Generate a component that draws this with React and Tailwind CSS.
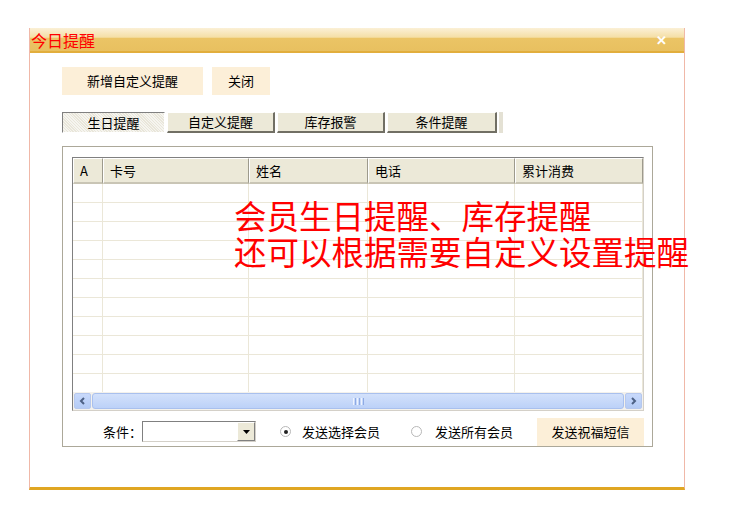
import React from 'react';

const COLS = [
  { label: 'A', w: 'w-[30px]' },
  { label: '卡号', w: 'w-[146px]' },
  { label: '姓名', w: 'w-[119px]' },
  { label: '电话', w: 'w-[147px]' },
  { label: '累计消费', w: 'flex-1' },
];

const TABS = [
  { label: '生日提醒', w: 'w-[103px]', active: true },
  { label: '自定义提醒', w: 'w-[108px]' },
  { label: '库存报警', w: 'w-[108px]' },
  { label: '条件提醒', w: 'w-[110px]' },
];

function Tab({ label, w, active }) {
  if (active) {
    return (
      <div
        className={`${w} h-[21px] flex items-center justify-center border border-t-[#808080] border-l-[#808080] border-b-white border-r-white bg-[repeating-linear-gradient(45deg,#f6f5f0_0px,#f6f5f0_1px,#e9e6da_1px,#e9e6da_2px)]`}
      >
        {label}
      </div>
    );
  }
  return (
    <div
      className={`${w} h-[21px] flex items-center justify-center bg-[#ece9d8] border-t border-l border-white border-r-2 border-b-2 border-r-[#716f64] border-b-[#716f64]`}
    >
      {label}
    </div>
  );
}

function Row() {
  return (
    <div className="flex h-[19px] border-b border-[#ebe7d8] shrink-0">
      {COLS.map((c, i) => (
        <div key={i} className={`${c.w} border-r border-[#ebe7d8] shrink-0`} />
      ))}
    </div>
  );
}

function Radio({ checked }) {
  return (
    <span className="w-[11px] h-[11px] rounded-full border border-[#b8b8b8] bg-white flex items-center justify-center">
      {checked && <span className="w-[4px] h-[4px] rounded-full bg-[#222]" />}
    </span>
  );
}

export default function App() {
  return (
    <div
      className="relative w-[740px] h-[514px] bg-white pt-[28px] pl-[29px] text-[13px] text-black"
      style={{ fontFamily: '"Noto Sans CJK SC", "Liberation Sans", sans-serif' }}
    >
      <div className="w-[656px] h-[462px] flex flex-col border-l border-r border-[#f0b8a8] border-b-[3px] border-b-[#e0a622]">
        {/* title bar */}
        <div className="h-[25px] flex items-center justify-between bg-[linear-gradient(#fbf0d6_0%,#f5dfa6_40%,#ebc465_45%,#e8c060_100%)] border-b-2 border-[#e2ae3c]">
          <span className="text-[16px] text-[#ff0000] leading-none pl-[1px]">今日提醒</span>
          <span className="text-white font-bold text-[13px] leading-none pr-[17px]">✕</span>
        </div>

        <div className="pl-[32px] pt-[14px] flex flex-col">
          {/* buttons */}
          <div className="flex gap-[9px]">
            <div className="w-[141px] h-[28px] bg-[#fcefd8] flex items-center justify-center">新增自定义提醒</div>
            <div className="w-[58px] h-[28px] bg-[#fcefd8] flex items-center justify-center">关闭</div>
          </div>

          {/* tabs */}
          <div className="flex gap-[2px] mt-[17px]">
            {TABS.map((t) => (
              <Tab key={t.label} {...t} />
            ))}
            <div className="w-[4px] h-[21px] bg-[#e4e1d4]" />
          </div>

          {/* group box */}
          <div className="mt-[13px] w-[591px] h-[301px] border border-[#aca899] pl-[9px] pt-[10px] flex flex-col">
            {/* grid */}
            <div className="w-[572px] h-[254px] border border-t-[#808080] border-l-[#808080] border-r-[#d4d0c8] border-b-[#d4d0c8] flex flex-col bg-white">
              <div className="flex h-[26px] shrink-0 bg-[#ece9d8]">
                {COLS.map((c, i) => (
                  <div
                    key={i}
                    className={`${c.w} shrink-0 flex items-center pl-[6px] border-t border-l border-white border-r border-b-2 border-r-[#9d9a8c] border-b-[#c9c5b5]`}
                  >
                    {c.label}
                  </div>
                ))}
              </div>
              <div className="h-[208px] overflow-hidden flex flex-col">
                {Array.from({ length: 11 }).map((_, i) => (
                  <Row key={i} />
                ))}
              </div>
              {/* horizontal scrollbar */}
              <div className="h-[18px] flex bg-[#f3f1ec] p-[1px] gap-[1px]">
                <div className="w-[17px] h-full rounded-[2px] bg-[linear-gradient(#c8d9fb,#b4cbf5)] border border-[#b6c8ee] flex items-center justify-center">
                  <svg width="7" height="8" viewBox="0 0 7 8"><path d="M5 1 L2 4 L5 7" stroke="#4d6185" strokeWidth="2" fill="none" /></svg>
                </div>
                <div className="flex-1 h-full rounded-[3px] bg-[linear-gradient(#d3e1fb,#bcd1f8)] border border-[#a9c0ee] flex items-center justify-center">
                  <div className="flex gap-[1px]">
                    <span className="w-[1px] h-[7px] bg-[#eef3fe]" />
                    <span className="w-[1px] h-[7px] bg-[#8eaae4]" />
                    <span className="w-[1px] h-[7px] bg-[#eef3fe]" />
                    <span className="w-[1px] h-[7px] bg-[#8eaae4]" />
                    <span className="w-[1px] h-[7px] bg-[#eef3fe]" />
                    <span className="w-[1px] h-[7px] bg-[#8eaae4]" />
                  </div>
                </div>
                <div className="w-[17px] h-full rounded-[2px] bg-[linear-gradient(#c8d9fb,#b4cbf5)] border border-[#b6c8ee] flex items-center justify-center">
                  <svg width="7" height="8" viewBox="0 0 7 8"><path d="M2 1 L5 4 L2 7" stroke="#4d6185" strokeWidth="2" fill="none" /></svg>
                </div>
              </div>
            </div>

            {/* bottom row */}
            <div className="flex items-center mt-[6px] h-[29px]">
              <span className="ml-[31px]">条件：</span>
              <div className="w-[114px] h-[21px] border border-t-[#808080] border-l-[#808080] border-r-[#d4d0c8] border-b-[#d4d0c8] bg-white flex justify-end">
                <div className="w-[18px] h-full bg-[#ece9d8] border-t border-l border-white border-r border-b border-r-[#808080] border-b-[#808080] flex items-center justify-center">
                  <svg width="7" height="4" viewBox="0 0 7 4"><path d="M0 0 H7 L3.5 4 Z" fill="#000" /></svg>
                </div>
              </div>
              <span className="ml-[24px] mr-[11px]"><Radio checked /></span>
              <span>发送选择会员</span>
              <span className="ml-[31px] mr-[13px]"><Radio /></span>
              <span>发送所有会员</span>
              <div className="ml-[24px] w-[107px] h-[28px] bg-[#fcefd8] flex items-center justify-center">发送祝福短信</div>
            </div>
          </div>
        </div>
      </div>

      {/* annotation overlay */}
      <div className="absolute left-[234px] top-[197px] text-[#ff0000] text-[32.5px] leading-[36px] whitespace-nowrap">
        <div>会员生日提醒、库存提醒</div>
        <div>还可以根据需要自定义设置提醒</div>
      </div>
    </div>
  );
}
